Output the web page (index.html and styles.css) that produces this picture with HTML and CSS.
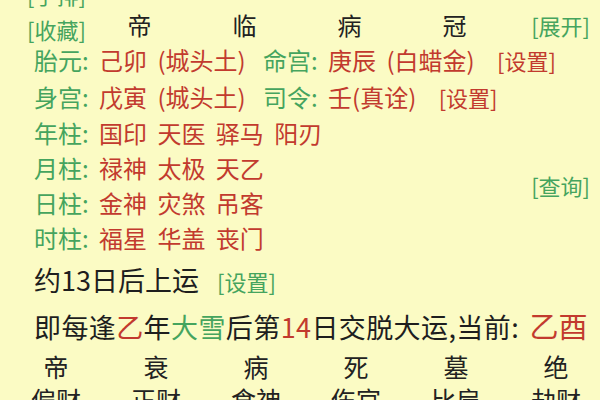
FILE: index.html
```html
<!DOCTYPE html>
<html lang="zh-CN">
<head>
<meta charset="utf-8">
<link rel="stylesheet" href="styles.css">
</head>
<body>
<div class="page">
  <div class="toprow"><span class="g link">[手排]</span></div>
  <div class="header">
    <span class="g link fav">[收藏]</span>
    <div class="stages">
      <span>帝</span><span>临</span><span>病</span><span>冠</span>
    </div>
    <span class="g link">[展开]</span>
  </div>
  <div class="info">
    <div class="irow"><span class="cell"><span class="g">胎元: </span><span class="r">己卯 (城头土)</span></span><span class="cell"><span class="g">命宫: </span><span class="r">庚辰 (白蜡金)</span> <span class="r set">[设置]</span></span></div>
    <div class="irow"><span class="cell"><span class="g">身宫: </span><span class="r">戊寅 (城头土)</span></span><span class="cell"><span class="g">司令: </span><span class="r">壬(真诠)</span> <span class="r set">[设置]</span></span></div>
  </div>
  <div class="pillars">
    <div class="plist">
      <div class="prow"><span class="g">年柱: </span><span class="r">国印 天医 驿马 阳刃</span></div>
      <div class="prow"><span class="g">月柱: </span><span class="r">禄神 太极 天乙</span></div>
      <div class="prow"><span class="g">日柱: </span><span class="r">金神 灾煞 吊客</span></div>
      <div class="prow"><span class="g">时柱: </span><span class="r">福星 华盖 丧门</span></div>
    </div>
    <span class="g link">[查询]</span>
  </div>
  <div class="start"><span class="k">约13日后上运</span><span class="g link set2">[设置]</span></div>
  <div class="luck"><span class="k">即每逢</span><span class="r">乙</span><span class="k">年</span><span class="g">大雪</span><span class="k">后第</span><span class="r">14</span><span class="k">日交脱大运,当前: </span><span class="r big">乙酉</span></div>
  <div class="grid stages2">
    <span>帝</span><span>衰</span><span>病</span><span>死</span><span>墓</span><span>绝</span>
  </div>
  <div class="grid gods">
    <span>偏财</span><span>正财</span><span>食神</span><span>伤官</span><span>比肩</span><span>劫财</span>
  </div>
</div>
</body>
</html>
```
FILE: styles.css
```css
html, body {
  margin: 0;
  padding: 0;
  background: #fbfbc4;
  overflow: hidden;
}
body {
  width: 600px;
  height: 400px;
  font-family: "Noto Sans CJK SC", "Noto Sans", sans-serif;
  color: #222;
  font-size: 24px;
}
.page {
  width: 600px;
}
.g { color: #45a45e; }
.r { color: #c23a2e; }
.k { color: #1e1e1e; }
.link { font-size: 22px; word-spacing: 0; }
.toprow {
  height: 30px;
  line-height: 30px;
  margin-top: -21px;
  padding-left: 27px;
}
.header {
  display: flex;
  align-items: center;
  height: 32px;
  line-height: 32px;
  padding: 0 10px 0 27px;
}
.fav {
  line-height: 24px;
  margin-top: 8px;
}
.stages {
  display: flex;
  margin-left: 1px;
}
.stages span {
  width: 105px;
  text-align: center;
}
.header .link:last-child {
  margin-left: auto;
}
.info {
  padding-left: 34px;
  word-spacing: 5px;
}
.irow {
  display: grid;
  grid-template-columns: 229px auto;
  height: 37px;
  line-height: 37px;
}
.set { font-size: 22px; margin-left: 12px; }
.pillars {
  display: flex;
  align-items: center;
  padding: 0 10px 0 34px;
  word-spacing: 5px;
}
.plist { flex: 1; }
.prow {
  height: 35px;
  line-height: 35px;
}
.start {
  padding-left: 34px;
  height: 42px;
  line-height: 42px;
  margin-top: 4px;
  font-size: 27px;
}
.set2 { margin-left: 18px; }
.luck {
  padding-left: 34px;
  height: 44px;
  line-height: 44px;
  margin-top: 2px;
  font-size: 27px;
  letter-spacing: 0.4px;
}
.big { font-size: 29px; margin-left: 4px; letter-spacing: 0; }
.grid {
  display: grid;
  grid-template-columns: repeat(6, 100px);
  padding-left: 6px;
  height: 36px;
  line-height: 36px;
  font-size: 25px;
}
.grid span { text-align: center; }
.stages2 { margin-top: 1px; }
.gods { margin-top: -3px; }
```
